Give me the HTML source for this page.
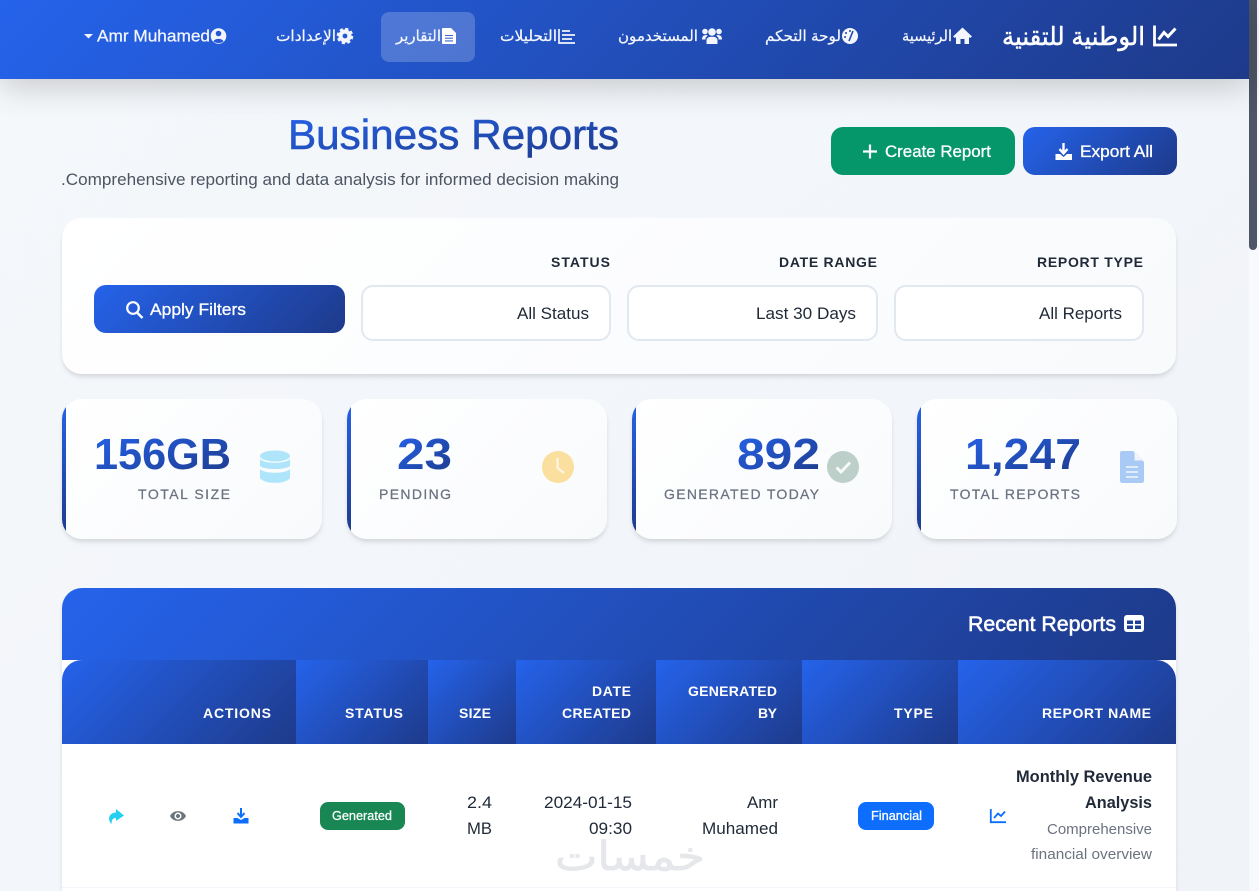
<!DOCTYPE html>
<html lang="ar" dir="ltr">
<head>
<meta charset="utf-8">
<title>Business Reports</title>
<style>
*{box-sizing:border-box;margin:0;padding:0}
html,body{width:1259px;height:891px;overflow:hidden;direction:ltr}
body{position:relative;background:linear-gradient(135deg,#f5f8fb 0%,#f0f3f8 100%);font-family:"Liberation Sans","DejaVu Sans",sans-serif}
.b{position:absolute}
.grad{background:linear-gradient(135deg,#2563eb 0%,#1e3a8a 100%)}
nav{left:0;top:0;width:1249px;height:79px;box-shadow:0 8px 32px rgba(0,0,0,.19)}
.pill{left:381px;top:12px;width:94px;height:50px;border-radius:8px;background:rgba(255,255,255,.2)}
.btn{border-radius:12px;height:48px;top:127px}
.card{background:linear-gradient(135deg,#fff 0%,#f8fafc 100%);box-shadow:0 4px 6px -1px rgba(0,0,0,.1),0 2px 4px -1px rgba(0,0,0,.06)}
.sel{top:285px;height:56px;border:2px solid #e2e8f0;border-radius:12px;background:#fff}
.stat{top:399px;width:260px;height:140px;border-radius:20px;overflow:hidden}
.stat i{position:absolute;left:0;top:0;width:4px;height:100%;background:linear-gradient(180deg,#2563eb,#1e3a8a)}
.th{top:660px;height:84px}
.scroll{left:1249px;top:0;width:10px;height:891px;background:#f8f9fc}
.thumb{left:1249px;top:0;width:8px;height:250px;background:#4d5566;border-radius:0 0 5px 5px}
svg{position:absolute;left:0;top:0;direction:ltr}
text{font-family:"Liberation Sans","DejaVu Sans",sans-serif;direction:ltr;text-anchor:start}
.n{font-size:15px;fill:#f3f6fd;stroke:#f3f6fd;stroke-width:.25}
.w{fill:#fff;font-size:16.800px;stroke:#fff;stroke-width:.3}
.fl{font-size:14px;font-weight:700;fill:#1f2937}
.sv{font-size:16.800px;fill:#1f2937}
.val{font-size:44px;font-weight:700;fill:url(#tg)}
.lab{font-size:14px;fill:#6b7280;stroke:#6b7280;stroke-width:.25}
.h{font-size:14px;font-weight:700;fill:#fff}
.t{font-size:16.800px;fill:#1f2937}
.s{font-size:14.700px;fill:#6b7280}
</style>
</head>
<body>
<div class="b scroll"></div><div class="b thumb"></div>
<nav class="b grad"></nav>
<div class="b pill"></div>
<div class="b btn" style="left:831px;width:184px;background:#059669"></div>
<div class="b btn grad" style="left:1023px;width:154px"></div>

<div class="b card" style="left:62px;top:218px;width:1114px;height:156px;border-radius:20px"></div>
<div class="b grad" style="left:94px;top:285px;width:251px;height:48px;border-radius:12px"></div>
<div class="b sel" style="left:361px;width:250px"></div>
<div class="b sel" style="left:627px;width:251px"></div>
<div class="b sel" style="left:894px;width:250px"></div>

<div class="b card stat" style="left:62px"><i></i></div>
<div class="b card stat" style="left:347px"><i></i></div>
<div class="b card stat" style="left:632px"><i></i></div>
<div class="b card stat" style="left:917px"><i></i></div>

<div class="b" style="left:62px;top:588px;width:1114px;height:320px;background:#fff;border-radius:20px 20px 0 0;box-shadow:0 4px 6px -1px rgba(0,0,0,.1),0 2px 4px -1px rgba(0,0,0,.06)"></div>
<div class="b grad" style="left:62px;top:588px;width:1114px;height:72px;border-radius:20px 20px 0 0"></div>
<div class="b grad th" style="left:62px;width:234px;border-top-left-radius:20px"></div>
<div class="b grad th" style="left:296px;width:132px"></div>
<div class="b grad th" style="left:428px;width:88px"></div>
<div class="b grad th" style="left:516px;width:140px"></div>
<div class="b grad th" style="left:656px;width:146px"></div>
<div class="b grad th" style="left:802px;width:156px"></div>
<div class="b grad th" style="left:958px;width:218px;border-top-right-radius:20px"></div>
<div class="b" style="left:62px;top:887px;width:1114px;height:1px;background:#f1f5f9"></div>
<div class="b" style="left:858px;top:802px;width:76px;height:28px;border-radius:8px;background:#0d6efd"></div>
<div class="b" style="left:320px;top:802px;width:85px;height:28px;border-radius:8px;background:#198754"></div>

<svg width="1259" height="891" viewBox="0 0 1259 891" xmlns="http://www.w3.org/2000/svg">
<defs>
<linearGradient id="tg" x1="0" y1="0" x2="1" y2="1"><stop offset="0" stop-color="#2563eb"/><stop offset="1" stop-color="#1e3a8a"/></linearGradient>
</defs>

<!-- nav -->
<text x="1002" y="45" textLength="143" lengthAdjust="spacingAndGlyphs" font-size="25" fill="#fff" stroke="#fff" stroke-width=".5">الوطنية للتقنية</text>
<path d="M1154.500 25.500V45H1177" fill="none" stroke="#fff" stroke-width="2.800"/>
<path d="M1158.500 39.500L1164 32.500L1168 36.500L1175.500 28.500" fill="none" stroke="#fff" stroke-width="3"/>

<text class="n" x="902" y="41" textLength="50" lengthAdjust="spacingAndGlyphs">الرئيسية</text>
<path d="M962.500 27.500L953 36.500L955 38L956 37V44H960.500V39H964.500V44H969V37L970 38L972 36.500Z" fill="#f3f6fd"/>

<text class="n" x="765" y="41" textLength="76" lengthAdjust="spacingAndGlyphs">لوحة التحكم</text>
<circle cx="850" cy="36" r="8" fill="#f3f6fd"/>
<path d="M849 41L853 31" stroke="#2148ae" stroke-width="1.600"/><circle cx="846" cy="33" r="1" fill="#2148ae"/><circle cx="845" cy="37" r="1" fill="#2148ae"/><circle cx="850" cy="31" r="1" fill="#2148ae"/>

<text class="n" x="618" y="41" textLength="80" lengthAdjust="spacingAndGlyphs">المستخدمون</text>
<g fill="#f3f6fd"><circle cx="712" cy="32" r="3.800"/><circle cx="705" cy="31.500" r="2.800"/><circle cx="719" cy="31.500" r="2.800"/><path d="M706.500 44V40.500C706.500 37.500 709 36.800 712 36.800S717.500 37.500 717.500 40.500V44Z"/><path d="M702 39.500C702 35.800 704 34.800 707.800 35.300L705.500 38V39.500Z"/><path d="M722 39.500C722 35.800 720 34.800 716.200 35.300L718.500 38V39.500Z"/></g>

<text class="n" x="500" y="41" textLength="57" lengthAdjust="spacingAndGlyphs">التحليلات</text>
<path d="M559 29V43H575M562 31H570M562 35H575M562 39H572" fill="none" stroke="#f3f6fd" stroke-width="1.700"/>

<text class="n" x="396" y="41" textLength="45" lengthAdjust="spacingAndGlyphs">التقارير</text>
<path d="M443 28H451L456 33V43Q456 44 455 44H443Q442 44 442 43V29Q442 28 443 28Z" fill="#fff"/><path d="M445 35.500H453M445 38.200H453M445 40.900H453" stroke="#3f69cf" stroke-width="1.100"/>

<text class="n" x="276" y="41" textLength="60" lengthAdjust="spacingAndGlyphs">الإعدادات</text>
<circle cx="345" cy="36" r="4.500" fill="none" stroke="#f3f6fd" stroke-width="4.200"/>
<circle cx="345" cy="36" r="7.200" fill="none" stroke="#f3f6fd" stroke-width="2.200" stroke-dasharray="3.200 2.450"/>

<text class="n" x="97" y="41.500" textLength="113" lengthAdjust="spacingAndGlyphs" style="font-size:16.800px">Amr Muhamed</text>
<circle cx="218.500" cy="36" r="7.800" fill="#f3f6fd"/><circle cx="218.500" cy="33.500" r="2.800" fill="#2558d6"/><path d="M213.500 41.500C214.500 38 222.500 38 223.500 41.500C221 43.500 216 43.500 213.500 41.500Z" fill="#2558d6"/>
<path d="M84 34H93L88.500 38.500Z" fill="#f3f6fd"/>

<!-- heading -->
<text x="288" y="149" textLength="331" lengthAdjust="spacingAndGlyphs" font-size="42" fill="url(#tg)" stroke="url(#tg)" stroke-width=".6">Business Reports</text>
<text x="61" y="185" textLength="558" lengthAdjust="spacingAndGlyphs" font-size="16.800" fill="#4b5563">.Comprehensive reporting and data analysis for informed decision making</text>

<path d="M870 144.500V158.500M863 151.500H877" stroke="#fff" stroke-width="2.200"/>
<text class="w" x="885" y="157" textLength="106" lengthAdjust="spacingAndGlyphs">Create Report</text>
<path d="M1063.500 143V152M1059.500 149L1063.500 153.500L1067.500 149" fill="none" stroke="#fff" stroke-width="2.400"/>
<path d="M1055.500 154H1060L1063.500 157L1067 154H1072V160H1055.500Z" fill="#fff"/>
<text class="w" x="1080" y="157" textLength="73" lengthAdjust="spacingAndGlyphs">Export All</text>

<!-- filters -->
<text class="fl" x="551" y="267" textLength="59" lengthAdjust="spacing">STATUS</text>
<text class="fl" x="779" y="267" textLength="98" lengthAdjust="spacing">DATE RANGE</text>
<text class="fl" x="1037" y="267" textLength="106" lengthAdjust="spacing">REPORT TYPE</text>
<text class="sv" x="517" y="319" textLength="72" lengthAdjust="spacingAndGlyphs">All Status</text>
<text class="sv" x="756" y="319" textLength="100" lengthAdjust="spacingAndGlyphs">Last 30 Days</text>
<text class="sv" x="1039" y="319" textLength="83" lengthAdjust="spacingAndGlyphs">All Reports</text>
<circle cx="133" cy="308" r="5.800" fill="none" stroke="#fff" stroke-width="2.200"/><path d="M137 312.500L142.500 318" stroke="#fff" stroke-width="2.400"/>
<text class="w" x="150" y="315" textLength="96" lengthAdjust="spacingAndGlyphs">Apply Filters</text>

<!-- stats -->
<text class="val" x="94" y="469" textLength="137" lengthAdjust="spacingAndGlyphs">156GB</text>
<text class="val" x="397" y="469" textLength="55" lengthAdjust="spacingAndGlyphs">23</text>
<text class="val" x="737" y="469" textLength="83" lengthAdjust="spacingAndGlyphs">892</text>
<text class="val" x="965" y="469" textLength="116" lengthAdjust="spacingAndGlyphs">1,247</text>
<text class="lab" x="138" y="499" textLength="92" lengthAdjust="spacing">TOTAL SIZE</text>
<text class="lab" x="379" y="499" textLength="72" lengthAdjust="spacing">PENDING</text>
<text class="lab" x="664" y="499" textLength="155" lengthAdjust="spacing">GENERATED TODAY</text>
<text class="lab" x="950" y="499" textLength="130" lengthAdjust="spacing">TOTAL REPORTS</text>

<g fill="#aee5fb"><ellipse cx="275" cy="456" rx="15" ry="5.500"/><path d="M260 459C264 464 286 464 290 459V466C286 470 264 470 260 466Z"/><path d="M260 469C264 474 286 474 290 469V478C286 484.500 264 484.500 260 478Z"/></g>
<circle cx="558" cy="467" r="16" fill="#fbdf9f"/><path d="M557.500 458V468L564 473" fill="none" stroke="#fdf6e6" stroke-width="2.200"/>
<ellipse cx="843" cy="467" rx="16" ry="16" fill="#bccfc8"/><path d="M836.500 467.500L841 472L850 462.500" fill="none" stroke="#f8fafa" stroke-width="3"/>
<path d="M1122 451H1133L1144 462V480.500Q1144 483 1141.500 483H1122.500Q1120 483 1120 480.500V453Q1120 451 1122 451Z" fill="#a9caf4"/><path d="M1134.500 451L1144 460.500H1134.500Z" fill="#eef4fd"/><path d="M1126 467H1138M1126 472H1138M1126 477H1138" stroke="#e6f0fc" stroke-width="1.800"/>

<!-- table -->
<text x="968" y="631" textLength="148" lengthAdjust="spacingAndGlyphs" font-size="21" fill="#fff" stroke="#fff" stroke-width=".55">Recent Reports</text>
<rect x="1124" y="615" width="20" height="17" rx="3" fill="#fff"/>
<g fill="#1f4099"><rect x="1127" y="620.500" width="6" height="3.500"/><rect x="1135" y="620.500" width="6" height="3.500"/><rect x="1127" y="625.500" width="6" height="3.500"/><rect x="1135" y="625.500" width="6" height="3.500"/></g>

<text class="h" x="203" y="718" textLength="68" lengthAdjust="spacing">ACTIONS</text>
<text class="h" x="345" y="718" textLength="58" lengthAdjust="spacing">STATUS</text>
<text class="h" x="459" y="718" textLength="32" lengthAdjust="spacing">SIZE</text>
<text class="h" x="592" y="696" textLength="39" lengthAdjust="spacing">DATE</text>
<text class="h" x="562" y="718" textLength="69" lengthAdjust="spacing">CREATED</text>
<text class="h" x="688" y="696" textLength="89" lengthAdjust="spacing">GENERATED</text>
<text class="h" x="758" y="718" textLength="19" lengthAdjust="spacing">BY</text>
<text class="h" x="894" y="718" textLength="39" lengthAdjust="spacing">TYPE</text>
<text class="h" x="1042" y="718" textLength="109" lengthAdjust="spacing">REPORT NAME</text>

<text x="1016" y="782" textLength="136" lengthAdjust="spacingAndGlyphs" font-size="16.800" font-weight="700" fill="#1f2937">Monthly Revenue</text>
<text x="1085" y="808" textLength="67" lengthAdjust="spacingAndGlyphs" font-size="16.800" font-weight="700" fill="#1f2937">Analysis</text>
<text class="s" x="1047" y="834" textLength="105" lengthAdjust="spacingAndGlyphs">Comprehensive</text>
<text class="s" x="1031" y="859" textLength="121" lengthAdjust="spacingAndGlyphs">financial overview</text>
<path d="M990.800 809V822.200H1006M994 818L998 813.500L1001 816L1005 811.500" fill="none" stroke="#0d6efd" stroke-width="1.800"/>

<text x="871" y="820" textLength="51" lengthAdjust="spacingAndGlyphs" font-size="12.500" fill="#fff" stroke="#fff" stroke-width=".3">Financial</text>
<text class="t" x="747" y="808" textLength="31" lengthAdjust="spacingAndGlyphs">Amr</text>
<text class="t" x="702" y="834" textLength="76" lengthAdjust="spacingAndGlyphs">Muhamed</text>
<text class="t" x="544" y="808" textLength="88" lengthAdjust="spacingAndGlyphs">2024-01-15</text>
<text class="t" x="589" y="834" textLength="43" lengthAdjust="spacingAndGlyphs">09:30</text>
<text class="t" x="467" y="808" textLength="25" lengthAdjust="spacingAndGlyphs">2.4</text>
<text class="t" x="467" y="834" textLength="25" lengthAdjust="spacingAndGlyphs">MB</text>
<text x="332" y="820" textLength="60" lengthAdjust="spacingAndGlyphs" font-size="12.500" fill="#fff" stroke="#fff" stroke-width=".25">Generated</text>

<path d="M241 808V816M237.500 813L241 817L244.500 813" fill="none" stroke="#0d6efd" stroke-width="2"/>
<path d="M233.500 818H237.500L241 820L244.500 818H248.500V823.500H233.500Z" fill="#0d6efd"/>
<path d="M170 816C173 809.500 183 809.500 186 816C183 822.500 173 822.500 170 816Z" fill="#6c757d"/><circle cx="178" cy="816" r="3.500" fill="#fff"/><circle cx="178" cy="816" r="2" fill="#6c757d"/>
<path d="M116 809L124 815.500L116 821V818C113 818 111.500 819.500 111.500 824C108 821 107.500 813 116 812.500Z" fill="#0dcaf0" opacity=".9"/>

<!-- watermark -->
<text x="555" y="870" textLength="150" lengthAdjust="spacingAndGlyphs" font-size="40" fill="#e5e7eb" stroke="#e5e7eb" stroke-width=".8">خمسات</text>
</svg>
</body>
</html>
